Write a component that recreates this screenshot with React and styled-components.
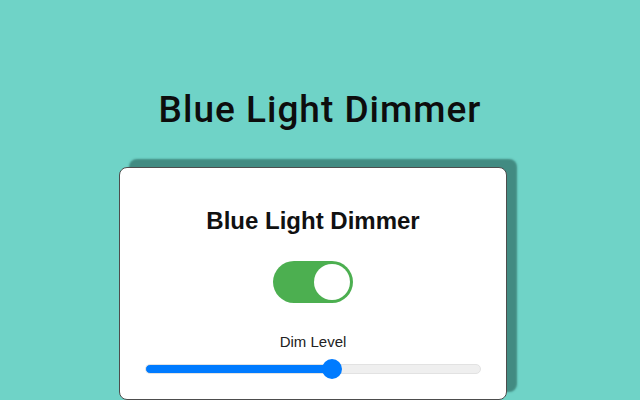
import React, { useState } from "react";
import styled, { createGlobalStyle } from "styled-components";

const GlobalStyle = createGlobalStyle`
  html, body {
    margin: 0;
    padding: 0;
  }
  body {
    background: #6fd3c7;
    font-family: "Liberation Sans", Arial, sans-serif;
  }
`;

const Page = styled.main`
  width: 640px;
  height: 400px;
  overflow: hidden;
  background: #6fd3c7;
  display: flex;
  flex-direction: column;
`;

const Headline = styled.h1`
  margin: 88px 0 0;
  text-align: center;
  font-family: Roboto, "DejaVu Sans", sans-serif;
  font-weight: 500;
  font-size: 37px;
  line-height: 44px;
  letter-spacing: 1px;
  color: #0d0d0d;
`;

const Card = styled.section`
  margin: 35px 0 0 119px;
  width: 388px;
  height: 260px;
  background: #fff;
  border: 1px solid #4d4d4d;
  border-radius: 8px;
  box-shadow: 10px -8px 2px rgba(30, 80, 72, 0.55);
  display: flex;
  flex-direction: column;
  align-items: center;
  box-sizing: border-box;
  padding-top: 39px;
`;

const Title = styled.h2`
  margin: 0;
  font-size: 24px;
  line-height: 28px;
  font-weight: 700;
  color: #111;
`;

const Switch = styled.label`
  position: relative;
  display: block;
  width: 80px;
  height: 42px;
  margin-top: 26px;
  cursor: pointer;

  input {
    opacity: 0;
    width: 0;
    height: 0;
  }
`;

const Track = styled.span`
  position: absolute;
  inset: 0;
  border-radius: 21px;
  background: ${(p) => (p.$on ? "#4caf50" : "#ccc")};
  transition: background 0.2s;

  &::before {
    content: "";
    position: absolute;
    top: 3px;
    left: ${(p) => (p.$on ? "41px" : "3px")};
    width: 36px;
    height: 36px;
    border-radius: 50%;
    background: #fff;
    transition: left 0.2s;
  }
`;

const Label = styled.div`
  margin-top: 30px;
  font-size: 15px;
  color: #222;
`;

const Range = styled.input`
  -webkit-appearance: none;
  appearance: none;
  width: 336px;
  height: 10px;
  margin: 14px 0 0;
  border-radius: 5px;
  border: 1px solid #e2e2e2;
  box-sizing: border-box;
  outline: none;

  &::-webkit-slider-thumb {
    -webkit-appearance: none;
    width: 20px;
    height: 20px;
    border-radius: 50%;
    background: #007bff;
    cursor: pointer;
  }
`;

export default function App() {
  const [on, setOn] = useState(true);
  const [level, setLevel] = useState(56);

  return (
    <Page>
      <GlobalStyle />
      <Headline>Blue Light Dimmer</Headline>
      <Card>
        <Title>Blue Light Dimmer</Title>
        <Switch>
          <input type="checkbox" checked={on} onChange={() => setOn(!on)} />
          <Track $on={on} />
        </Switch>
        <Label>Dim Level</Label>
        <Range
          type="range"
          min="0"
          max="100"
          value={level}
          onChange={(e) => setLevel(Number(e.target.value))}
          style={{
            background: `linear-gradient(to right, #007bff ${level}%, #efefef ${level}%)`,
          }}
        />
      </Card>
    </Page>
  );
}
